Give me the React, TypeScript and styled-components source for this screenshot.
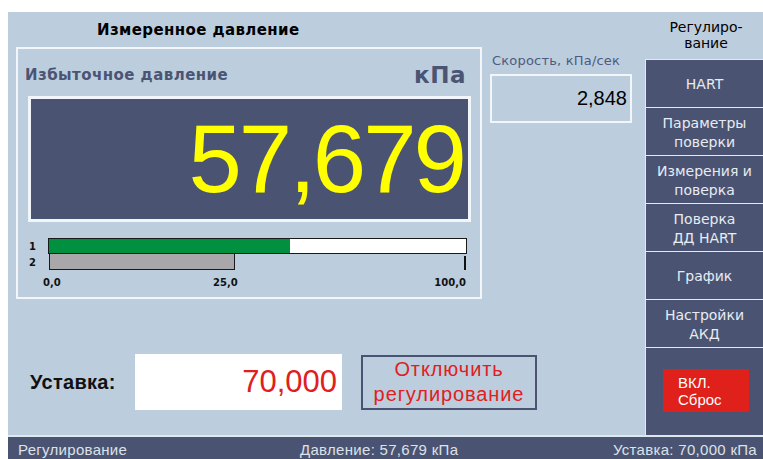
import React from "react";
import styled, { createGlobalStyle } from "styled-components";

const LIGHT = "#bccddd";
const DARK = "#4a5472";
const EDGE = "#f2f5f9";
const UI = `"DejaVu Sans", "Liberation Sans", sans-serif`;
const NARROW = `"Liberation Sans", Arial, sans-serif`;

const GlobalStyle = createGlobalStyle`
  html, body {
    margin: 0;
    padding: 0;
    background: #fff;
    overflow: hidden;
  }
`;

const Screen = styled.div`
  margin: 12px 0 0 8px;
  width: 755px;
  height: 447px;
  display: flex;
  flex-direction: column;
  background: ${LIGHT};
  font-family: ${UI};
`;

const Main = styled.div`
  display: flex;
  height: 423px;
`;

const LeftArea = styled.div`
  width: 637px;
  display: flex;
  flex-direction: column;
`;

const Title = styled.div`
  height: 35px;
  padding-left: 89px;
  display: flex;
  align-items: center;
  font-size: 15px;
  font-weight: bold;
  letter-spacing: 0.4px;
  color: #000;
`;

const MidRow = styled.div`
  display: flex;
  gap: 8px;
  padding-left: 8px;
`;

const Panel = styled.div`
  width: 462px;
  height: 248px;
  border: 2px solid ${EDGE};
  display: flex;
  flex-direction: column;
`;

const PanelHead = styled.div`
  height: 47px;
  display: flex;
  align-items: center;
  justify-content: space-between;
  padding: 4px 14px 0 7px;
  box-sizing: border-box;
  color: #4b5573;
  font-weight: bold;
`;

const Caption = styled.span`
  font-size: 15px;
  letter-spacing: 0.45px;
`;

const Unit = styled.span`
  font-size: 23px;
  letter-spacing: 0.5px;
`;

const Display = styled.div`
  margin: 0 9px 0 10px;
  height: 120px;
  border: 3px solid ${EDGE};
  background: ${DARK};
  display: flex;
  align-items: center;
  justify-content: flex-end;
  padding-right: 4px;
  color: #ffff00;
  font-family: ${NARROW};
  font-size: 96px;
  letter-spacing: -3px;
  line-height: 1;
`;

const Bars = styled.div`
  margin-top: 16px;
  display: flex;
  flex-direction: column;
  font-size: 10px;
  font-weight: bold;
  color: #111;
`;

const BarRow = styled.div<{ $h: number }>`
  display: flex;
  align-items: center;
  height: ${(p) => p.$h}px;
`;

const BarIndex = styled.span`
  width: 30px;
  padding-left: 11px;
  box-sizing: border-box;
`;

const Track = styled.div<{ $empty?: boolean }>`
  width: 419px;
  height: 100%;
  box-sizing: border-box;
  border: 1px solid ${(p) => (p.$empty ? "transparent" : "#1a1a1a")};
  border-top-width: ${(p) => (p.$empty ? "0" : "1px")};
  background: ${(p) => (p.$empty ? "transparent" : "#fff")};
  position: relative;
  display: flex;
`;

const Fill = styled.div<{ $color: string; $framed?: boolean }>`
  height: 100%;
  background: ${(p) => p.$color};
  box-sizing: border-box;
  border: ${(p) => (p.$framed ? "1px solid #1a1a1a" : "none")};
  border-top: none;
`;

const EndTick = styled.div`
  position: absolute;
  right: 0;
  top: 2px;
  width: 2px;
  height: 14px;
  background: #111;
`;

const Scale = styled.div`
  display: flex;
  margin-top: 6px;
  padding-left: 25px;
`;

const ScaleMark = styled.span<{ $w: number; $right?: boolean }>`
  width: ${(p) => p.$w}px;
  text-align: ${(p) => (p.$right ? "right" : "left")};
`;

const SpeedCol = styled.div`
  width: 142px;
  display: flex;
  flex-direction: column;
`;

const SpeedLabel = styled.div`
  height: 27px;
  padding: 6px 0 0 2px;
  box-sizing: border-box;
  font-size: 13px;
  letter-spacing: 0.2px;
  color: #4d5b80;
`;

const SpeedBox = styled.div`
  height: 45px;
  border: 2px solid ${EDGE};
  display: flex;
  align-items: center;
  justify-content: flex-end;
  padding-right: 3px;
  font-family: ${NARROW};
  font-size: 20px;
  color: #000;
`;

const SetRow = styled.div`
  margin-top: 55px;
  display: flex;
  align-items: center;
  padding-left: 22px;
`;

const SetLabel = styled.div`
  width: 105px;
  font-family: ${NARROW};
  font-size: 20px;
  font-weight: bold;
  letter-spacing: 0.3px;
  color: #111;
`;

const SetBox = styled.div`
  width: 207px;
  height: 56px;
  background: #fff;
  display: flex;
  align-items: center;
  justify-content: flex-end;
  padding-right: 5px;
  box-sizing: border-box;
  font-family: ${NARROW};
  font-size: 31px;
  color: #e02020;
`;

const StopButton = styled.button`
  margin-left: 19px;
  width: 176px;
  height: 55px;
  border: 2px solid ${DARK};
  background: ${LIGHT};
  color: #e02020;
  font-family: ${NARROW};
  font-size: 20px;
  letter-spacing: 0.9px;
  line-height: 25px;
  padding: 0 0 2px;
  cursor: pointer;
`;

const SideCol = styled.div`
  flex: 1;
  display: flex;
  flex-direction: column;
`;

const SideHead = styled.div`
  height: 47px;
  display: flex;
  align-items: center;
  justify-content: center;
  text-align: center;
  font-size: 14px;
  line-height: 16px;
  color: #000;
  padding: 0 0 2px 4px;
  box-sizing: border-box;
`;

const SideMenu = styled.div`
  flex: 1;
  display: flex;
  flex-direction: column;
  background: ${DARK};
  border-left: 1px solid #e4e9f0;
`;

const SideButton = styled.div`
  height: 48px;
  box-sizing: border-box;
  border-top: 1px solid #e4e9f0;
  display: flex;
  align-items: center;
  justify-content: center;
  text-align: center;
  padding-top: 2px;
  font-size: 14px;
  line-height: 19px;
  color: #e8ebf2;
`;

const PowerCell = styled.div`
  flex: 1;
  border-top: 1px solid #e4e9f0;
  display: flex;
  align-items: center;
  justify-content: center;
  padding: 0 0 2px 3px;
`;

const PowerButton = styled.div`
  width: 86px;
  height: 43px;
  background: #e0201a;
  color: #fff;
  font-family: ${NARROW};
  font-size: 15px;
  line-height: 17px;
  padding: 5px 0 0 15px;
  box-sizing: border-box;
`;

const StatusBar = styled.div`
  border-top: 2px solid #dfe7ef;
  background: ${DARK};
  flex: 1;
  display: grid;
  grid-template-columns: 282px 1fr auto;
  align-items: start;
  padding: 4px 6px 0 10px;
  box-sizing: border-box;
  font-family: ${NARROW};
  font-size: 15px;
  line-height: 17px;
  letter-spacing: 0.3px;
  color: #dde1ea;
`;

const menu = [
  ["HART"],
  ["Параметры", "поверки"],
  ["Измерения и", "поверка"],
  ["Поверка", "ДД HART"],
  ["График"],
  ["Настройки", "АКД"],
];

const lines = (parts: string[]) =>
  parts.map((t, i) => (
    <React.Fragment key={i}>
      {i > 0 && <br />}
      {t}
    </React.Fragment>
  ));

export default function App() {
  const pressure = 57.679;
  const setpoint = 70;
  const fmt = (v: number) => v.toFixed(3).replace(".", ",");

  return (
    <>
      <GlobalStyle />
      <Screen>
        <Main>
          <LeftArea>
            <Title>Измеренное давление</Title>
            <MidRow>
              <Panel>
                <PanelHead>
                  <Caption>Избыточное давление</Caption>
                  <Unit>кПа</Unit>
                </PanelHead>
                <Display>{fmt(pressure)}</Display>
                <Bars>
                  <BarRow $h={16}>
                    <BarIndex>1</BarIndex>
                    <Track>
                      <Fill $color="#009040" style={{ width: `${pressure}%` }} />
                    </Track>
                  </BarRow>
                  <BarRow $h={17}>
                    <BarIndex>2</BarIndex>
                    <Track $empty>
                      <Fill $color="#aaa7aa" $framed style={{ width: "44.5%" }} />
                      <EndTick />
                    </Track>
                  </BarRow>
                  <Scale>
                    <ScaleMark $w={170}>0,0</ScaleMark>
                    <ScaleMark $w={60}>25,0</ScaleMark>
                    <ScaleMark $w={193} $right>100,0</ScaleMark>
                  </Scale>
                </Bars>
              </Panel>
              <SpeedCol>
                <SpeedLabel>Скорость, кПа/сек</SpeedLabel>
                <SpeedBox>2,848</SpeedBox>
              </SpeedCol>
            </MidRow>
            <SetRow>
              <SetLabel>Уставка:</SetLabel>
              <SetBox>{fmt(setpoint)}</SetBox>
              <StopButton>
                Отключить
                <br />
                регулирование
              </StopButton>
            </SetRow>
          </LeftArea>
          <SideCol>
            <SideHead>
              Регулиро-
              <br />
              вание
            </SideHead>
            <SideMenu>
              {menu.map((m, i) => (
                <SideButton key={i}>{lines(m)}</SideButton>
              ))}
              <PowerCell>
                <PowerButton>
                  ВКЛ.
                  <br />
                  Сброс
                </PowerButton>
              </PowerCell>
            </SideMenu>
          </SideCol>
        </Main>
        <StatusBar>
          <span>Регулирование</span>
          <span>Давление: {fmt(pressure)} кПа</span>
          <span>Уставка: {fmt(setpoint)} кПа</span>
        </StatusBar>
      </Screen>
    </>
  );
}
